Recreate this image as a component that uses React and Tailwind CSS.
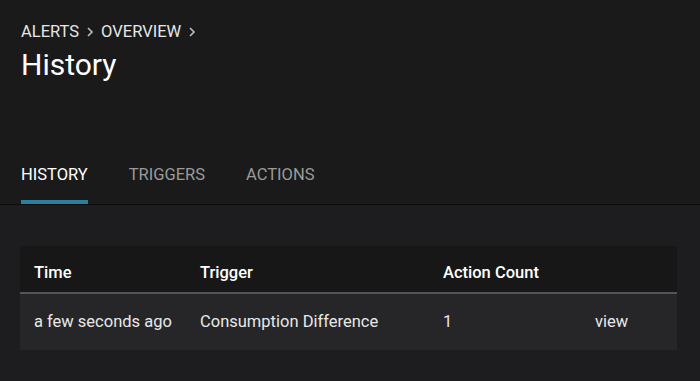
const rows = [
  { time: 'a few seconds ago', trigger: 'Consumption Difference', count: '1' },
];

const tabs = ['History', 'Triggers', 'Actions'];

export default function App() {
  return (
    <div className="w-[700px] h-[381px] overflow-hidden bg-[#1d1d1f] font-['Roboto',sans-serif] text-[#e8e8e8]">
      {/* header */}
      <div className="bg-[#1a1a1a] px-[21px] pt-[22px] border-b border-[#0b0b0b]">
        <div className="flex items-center gap-[7px] text-[16.5px] leading-[20px] uppercase text-[#e6e6e6]">
          <span>Alerts</span>
          <Chevron />
          <span>Overview</span>
          <Chevron />
        </div>
        <h1 className="text-[30px] leading-[36px] mt-[5px] text-white">History</h1>
        <div className="flex gap-[41px] mt-[81px]">
          {tabs.map((t, i) => (
            <div
              key={t}
              className={`pb-[14px] text-[16.5px] leading-[22px] uppercase border-b-4 ${
                i === 0 ? 'text-white border-[#2b7f9b]' : 'text-[#9a9a9a] border-transparent'
              }`}
            >
              {t}
            </div>
          ))}
        </div>
      </div>

      {/* table */}
      <div className="px-[20px] pt-[41px]">
        <div className="w-[657px]">
          <div className="grid grid-cols-[166px_243px_152px_96px] h-[48px] pt-[8px] items-center bg-[#171717] border-b-2 border-[#555] text-[16.5px] font-medium text-white">
            <div className="pl-[14px]">Time</div>
            <div className="pl-[14px]">Trigger</div>
            <div className="pl-[14px]">Action Count</div>
            <div />
          </div>
          {rows.map((r) => (
            <div key={r.time} className="grid grid-cols-[166px_243px_152px_96px] h-[56px] items-center bg-[#262629] text-[16.5px] text-[#e8e8e8]">
              <div className="pl-[14px]">{r.time}</div>
              <div className="pl-[14px]">{r.trigger}</div>
              <div className="pl-[14px]">{r.count}</div>
              <div className="pl-[14px]">view</div>
            </div>
          ))}
        </div>
      </div>
    </div>
  );
}

function Chevron() {
  return (
    <svg width="8" height="12" viewBox="0 0 8 12" className="text-[#bdbdbd]">
      <path d="M2 2l4 4-4 4" fill="none" stroke="currentColor" strokeWidth="1.6" />
    </svg>
  );
}
